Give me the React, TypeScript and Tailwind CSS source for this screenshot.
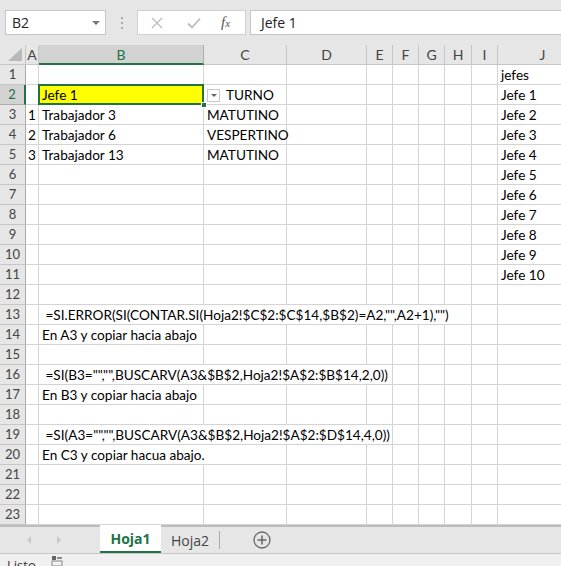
import React from "react";

const COLS = ["A", "B", "C", "D", "E", "F", "G", "H", "I", "J"];
const gridCols =
  "grid grid-cols-[26px_13px_165px_83px_80px_26px_26px_26px_27px_26px_90px]";

type Cell = { c: number; span?: number; text: string; right?: boolean };

const SPAN: Record<number, string> = {
  1: "",
  2: "col-span-2",
  4: "col-span-4",
  7: "col-span-7",
};

const data: Record<number, Cell[]> = {
  1: [{ c: 9, text: "jefes" }],
  2: [{ c: 9, text: "Jefe 1" }],
  3: [
    { c: 0, text: "1", right: true },
    { c: 1, text: "Trabajador 3" },
    { c: 2, text: "MATUTINO" },
    { c: 9, text: "Jefe 2" },
  ],
  4: [
    { c: 0, text: "2", right: true },
    { c: 1, text: "Trabajador 6" },
    { c: 2, text: "VESPERTINO" },
    { c: 9, text: "Jefe 3" },
  ],
  5: [
    { c: 0, text: "3", right: true },
    { c: 1, text: "Trabajador 13" },
    { c: 2, text: "MATUTINO" },
    { c: 9, text: "Jefe 4" },
  ],
  6: [{ c: 9, text: "Jefe 5" }],
  7: [{ c: 9, text: "Jefe 6" }],
  8: [{ c: 9, text: "Jefe 7" }],
  9: [{ c: 9, text: "Jefe 8" }],
  10: [{ c: 9, text: "Jefe 9" }],
  11: [{ c: 9, text: "Jefe 10" }],
  13: [
    {
      c: 1,
      span: 7,
      text: ' =SI.ERROR(SI(CONTAR.SI(Hoja2!$C$2:$C$14,$B$2)=A2,"",A2+1),"")',
    },
  ],
  14: [{ c: 1, text: "En A3 y copiar hacia abajo" }],
  16: [
    {
      c: 1,
      span: 4,
      text: ' =SI(B3="","",BUSCARV(A3&$B$2,Hoja2!$A$2:$B$14,2,0))',
    },
  ],
  17: [{ c: 1, text: "En B3 y copiar hacia abajo" }],
  19: [
    {
      c: 1,
      span: 4,
      text: ' =SI(A3="","",BUSCARV(A3&$B$2,Hoja2!$A$2:$D$14,4,0))',
    },
  ],
  20: [{ c: 1, span: 2, text: "En C3 y copiar hacua abajo." }],
};

const cellBase =
  "h-[20px] border-r border-b border-[#d4d4d4] px-[3px] pt-[2px] flex items-center whitespace-pre text-black";

function Row({ n }: { n: number }) {
  const cells = data[n] || [];
  const out: React.ReactNode[] = [];
  let i = 0;
  while (i < COLS.length) {
    const cell = cells.find((x) => x.c === i);
    if (n === 2 && i === 1) {
      out.push(
        <div key={i} className={`${cellBase} relative bg-[#ffff00]`}>
          <span>Jefe 1</span>
          <div className="absolute -left-[1px] -top-[1px] -right-[1px] -bottom-[1px] border-2 border-[#217346]" />
          <div className="absolute -right-[4px] -bottom-[4px] w-[6px] h-[6px] bg-[#217346] border border-white" />
        </div>
      );
      i++;
      continue;
    }
    if (n === 2 && i === 2) {
      out.push(
        <div key={i} className={`${cellBase} gap-[6px] pl-[3px]`}>
          <div className="w-[13px] h-[13px] border border-[#c8c8c8] bg-white flex items-center justify-center">
            <div className="w-0 h-0 border-l-[3px] border-r-[3px] border-t-[3px] border-l-transparent border-r-transparent border-t-[#666]" />
          </div>
          <span>TURNO</span>
        </div>
      );
      i++;
      continue;
    }
    if (cell) {
      const span = cell.span || 1;
      out.push(
        <div
          key={i}
          className={`${cellBase} ${SPAN[span]} ${cell.right ? "justify-end pr-[2px]" : ""}`}
        >
          {cell.text}
        </div>
      );
      i += span;
    } else {
      out.push(<div key={i} className={cellBase} />);
      i++;
    }
  }
  const active = n === 2;
  return (
    <div className={gridCols}>
      <div
        className={`h-[20px] border-b pt-[1px] flex items-center justify-center text-[13px] ${
          active
            ? "bg-[#d2d2d2] text-[#217346] border-r-2 border-r-[#217346] border-b-[#ababab]"
            : "bg-[#e6e6e6] text-[#444] border-r border-r-[#ababab] border-b-[#c6c6c6]"
        }`}
      >
        {n}
      </div>
      {out}
    </div>
  );
}

export default function App() {
  const rows = Array.from({ length: 23 }, (_, k) => k + 1);
  return (
    <div
      className="w-[561px] h-[566px] overflow-hidden bg-white flex flex-col"
      style={{ fontFamily: "'Lato', 'Open Sans', sans-serif" }}
    >
      {/* formula bar */}
      <div className="h-[45px] shrink-0 bg-[#e6e6e6] flex items-start pt-[10px] pl-[5px] text-[14px] font-['Open_Sans',sans-serif]">
        <div className="w-[101px] h-[25px] bg-white border border-[#c6c6c6] flex items-center justify-between pl-[6px] pr-[5px] text-[#222]">
          <span>B2</span>
          <div className="w-0 h-0 border-l-[4px] border-r-[4px] border-t-[4px] border-l-transparent border-r-transparent border-t-[#777]" />
        </div>
        <div className="w-[31px] h-[25px] flex flex-col items-center justify-center gap-[3px]">
          <div className="w-[2px] h-[2px] bg-[#aaa]" />
          <div className="w-[2px] h-[2px] bg-[#aaa]" />
          <div className="w-[2px] h-[2px] bg-[#aaa]" />
        </div>
        <div className="w-[109px] h-[25px] bg-white border border-[#d0d0d0] flex items-center">
          <svg width="12" height="12" viewBox="0 0 12 12" className="ml-[13px]">
            <path d="M1 1 L11 11 M11 1 L1 11" stroke="#bdbdbd" strokeWidth="1.4" />
          </svg>
          <svg width="14" height="12" viewBox="0 0 14 12" className="ml-[24px]">
            <path d="M1 6.5 L5 10.5 L13 1.5" fill="none" stroke="#bdbdbd" strokeWidth="1.8" />
          </svg>
          <span className="ml-[20px] italic text-[15px] text-[#555] font-['Liberation_Serif',serif]">
            f<span className="text-[11px]">x</span>
          </span>
        </div>
        <div className="ml-[4px] flex-1 h-[25px] bg-white border border-[#c6c6c6] border-r-0 flex items-center pl-[10px] text-[#222]">
          Jefe 1
        </div>
      </div>

      {/* column headers */}
      <div className={gridCols}>
        <div className="h-[20px] bg-[#e6e6e6] border-r border-b border-[#c6c6c6] relative">
          <svg width="14" height="13" viewBox="0 0 14 13" className="absolute right-[3px] bottom-[3px]">
            <path d="M14 0 L14 13 L0 13 Z" fill="#b8b8b8" />
          </svg>
        </div>
        {COLS.map((c) =>
          c === "B" ? (
            <div
              key={c}
              className="h-[20px] bg-[#d2d2d2] text-[#217346] border-r border-r-[#ababab] border-b-2 border-b-[#217346] flex items-center justify-center text-[14px]"
            >
              {c}
            </div>
          ) : (
            <div
              key={c}
              className="h-[20px] bg-[#e6e6e6] text-[#444] border-r border-b border-[#c6c6c6] flex items-center justify-center text-[14px]"
            >
              {c}
            </div>
          )
        )}
      </div>

      {/* cells */}
      <div className="text-[13.6px]">
        {rows.map((n) => (
          <Row key={n} n={n} />
        ))}
      </div>

      {/* sheet tabs */}
      <div className="h-[28px] shrink-0 bg-[#e6e6e6] border-t-2 border-[#bdbdbd] flex items-stretch text-[14px] font-['Open_Sans',sans-serif]">
        <div className="w-[100px] flex items-center">
          <div className="ml-[27px] w-0 h-0 border-t-[4px] border-b-[4px] border-r-[4px] border-t-transparent border-b-transparent border-r-[#c8c8c8]" />
          <div className="ml-[26px] w-0 h-0 border-t-[4px] border-b-[4px] border-l-[4px] border-t-transparent border-b-transparent border-l-[#c8c8c8]" />
        </div>
        <div className="w-[61px] -mt-[2px] bg-white border-b-2 border-[#217346] flex items-center justify-center font-bold text-[#217346]">
          Hoja1
        </div>
        <div className="w-[58px] flex items-center justify-center text-[#444]">
          Hoja2
        </div>
        <div className="w-px my-[4px] bg-[#aaa]" />
        <div className="w-[84px] flex items-center justify-center">
          <svg width="18" height="18" viewBox="0 0 18 18">
            <circle cx="9" cy="9" r="8" fill="none" stroke="#666" strokeWidth="1.3" />
            <path d="M9 4.5 V13.5 M4.5 9 H13.5" stroke="#666" strokeWidth="1.5" />
          </svg>
        </div>
      </div>

      {/* status bar */}
      <div className="h-[20px] shrink-0 bg-[#f0f0f0] border-t border-[#c6c6c6] flex items-start text-[13px] text-[#333] font-['Open_Sans',sans-serif]">
        <span className="ml-[7px] mt-[1px] leading-[20px]">Listo</span>
        <svg width="12" height="12" viewBox="0 0 12 12" className="ml-[15px] mt-[1px]">
          <rect x="1" y="1" width="4" height="4" fill="#666" />
          <rect x="6" y="2" width="5" height="2" fill="#888" />
          <rect x="1" y="6" width="10" height="5" fill="none" stroke="#888" />
        </svg>
      </div>
    </div>
  );
}
